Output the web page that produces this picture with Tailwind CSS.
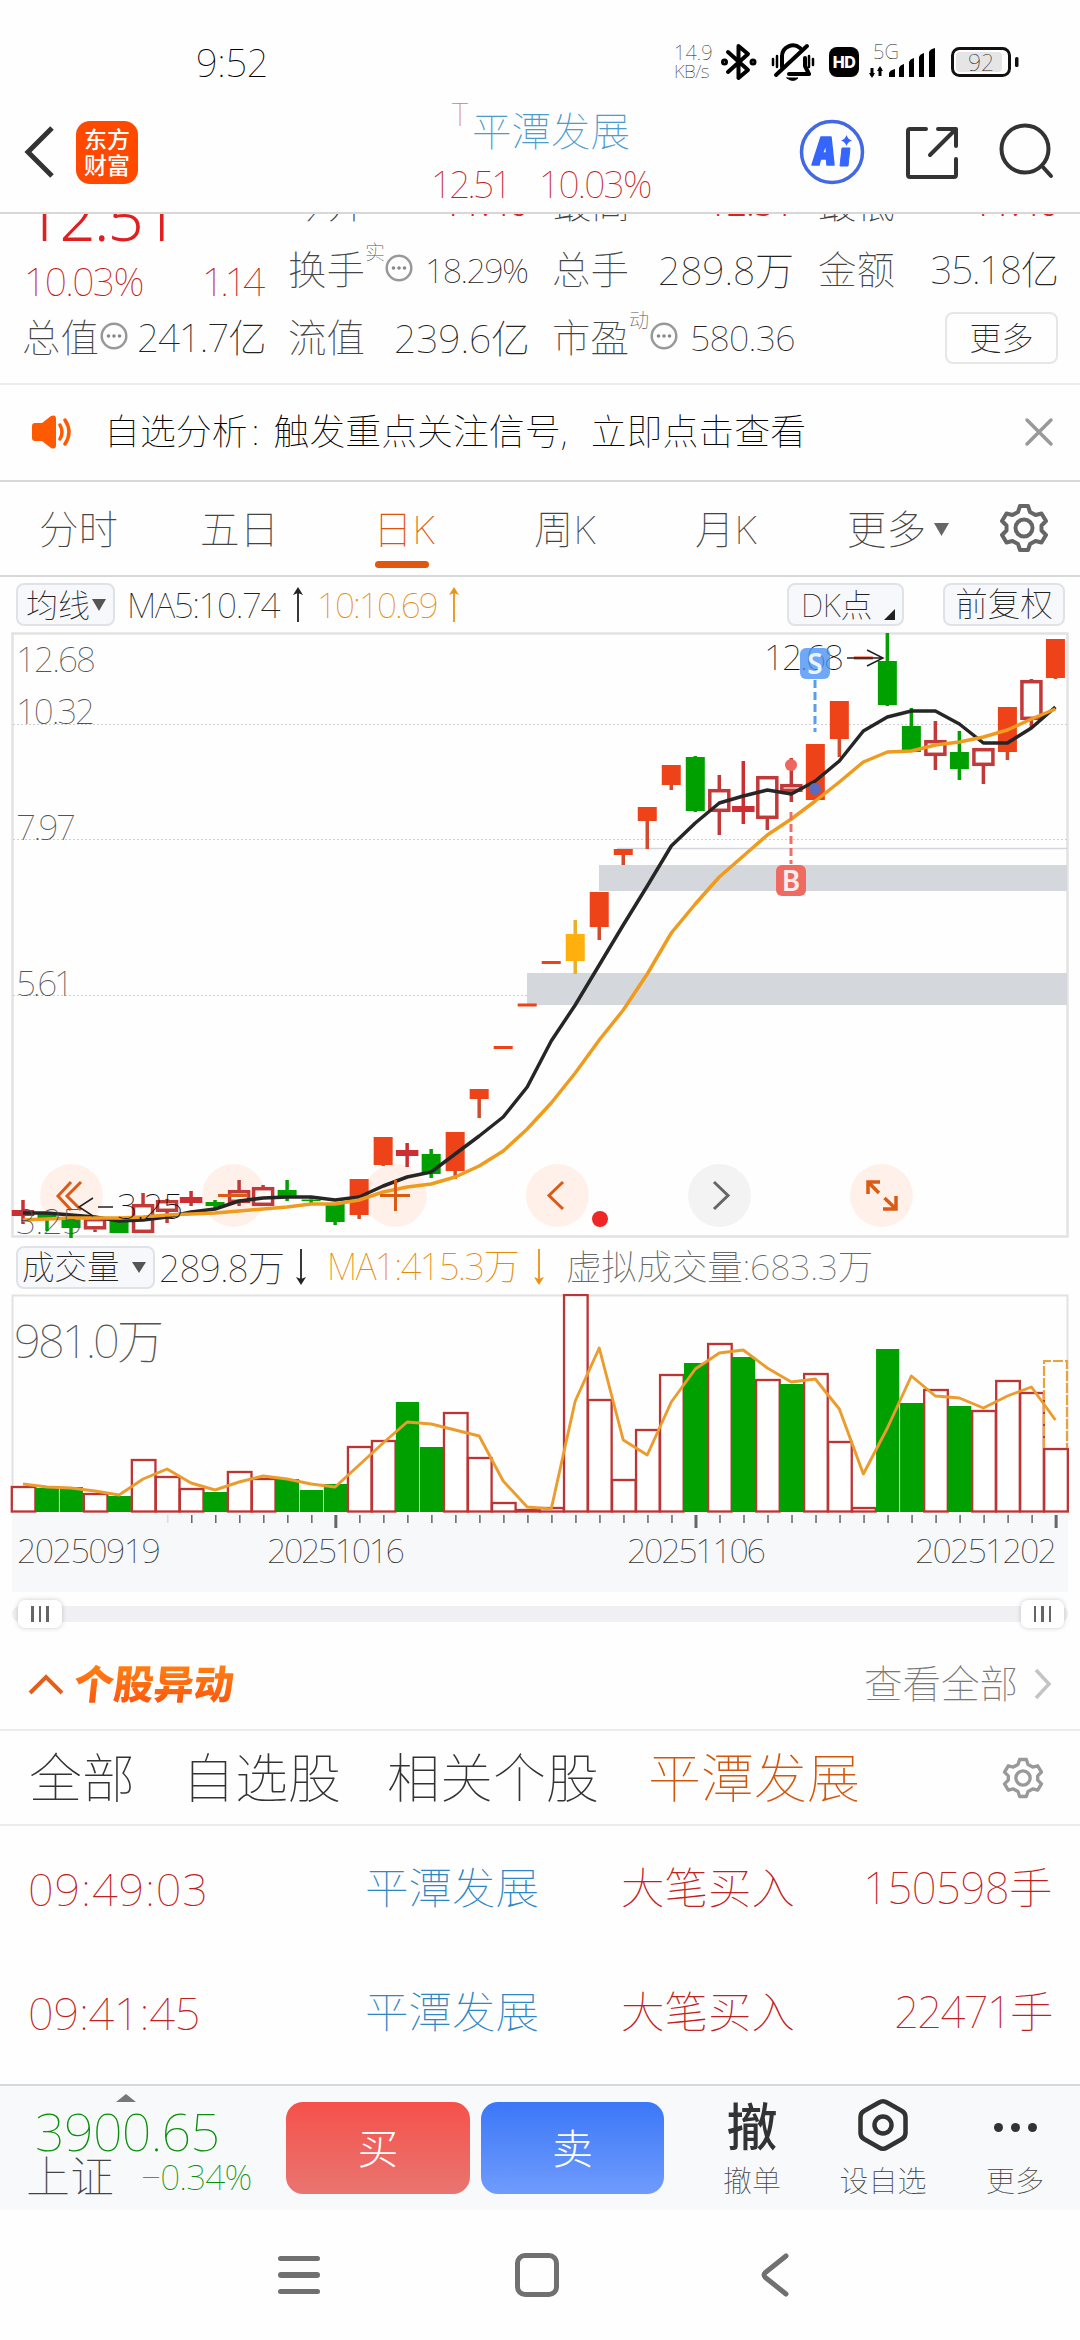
<!DOCTYPE html>
<html lang="zh-CN">
<head>
<meta charset="utf-8">
<title>平潭发展</title>
<script src="https://cdn.jsdelivr.net/npm/@tailwindcss/browser@4"></script>
</head>
<body class="bg-white">
<div class="flex h-[2340px] w-[1080px] flex-col overflow-hidden bg-[#fefefe] font-['Noto_Sans','Noto_Sans_CJK_SC',sans-serif] font-[150] leading-none whitespace-nowrap text-[#222]">

  <!-- Status bar -->
  <div class="flex h-[84px] shrink-0 items-center pt-[40px] text-black">
    <span class="ml-[196px] w-[478px] text-[38px] tracking-[-0.3px]">9:52</span>
    <div class="flex w-[40px] flex-col text-[20px] leading-[18px] text-[#222]"><span>14.9</span><span class="text-[19px] tracking-[-0.5px]">KB/s</span></div>
    <svg class="ml-[6px] h-[40px] w-[38px]" viewBox="0 0 38 40" fill="none" stroke="#000" stroke-width="4" stroke-linejoin="round" stroke-linecap="round"><path d="M8 10 L28 28 L18.500 36 V4 L28 12 L8 30"/><circle cx="4.500" cy="20" r="1.500"/><circle cx="33" cy="20" r="1.500"/></svg>
    <svg class="ml-[12px] h-[40px] w-[46px]" viewBox="0 0 46 40" fill="none" stroke="#000" stroke-width="4" stroke-linecap="round"><path d="M12 25V14a11 11 0 0 1 18-8M35 16v8l4 8H19" stroke-linejoin="round"/><path d="M6 33 37 4" /><path d="M3 17v6M7 14v11M39 14v11M43 17v6" stroke-width="2.500"/><path d="M17 36h11q-5 5-11 0z" fill="#000" stroke-width="1"/></svg>
    <div class="ml-[13px] flex h-[30px] w-[30px] items-center justify-center rounded-[8px] bg-black font-['Inter'] text-[16px] font-extrabold tracking-[-0.5px] text-white">HD</div>
    <svg class="ml-[10px] h-[44px] w-[72px]" viewBox="0 -2 72 44"><text x="4" y="17" font-size="20" fill="#222">5G</text><path d="M3 26v8M11 26v8" stroke="#000" stroke-width="3"/><path d="M0 31h6l-3 5zM8 29h6l-3-5z" /><g fill="#000"><path d="M20 35v-4q1-3 6-4v8zM30 35v-9q1-3 5-4v13zM40 35V20q1-3 5-4v19zM50 35V15q1-3 5-4v24zM60 35V10q1-3 6-4v29z"/></g></svg>
    <svg class="ml-[10px] h-[32px] w-[70px]" viewBox="0 0 70 32"><rect x="1.500" y="2.500" width="57" height="27" rx="7" fill="#fff" stroke="#111" stroke-width="3"/><rect x="5" y="6" width="46" height="20" rx="4" fill="#e5e5e5"/><rect x="64" y="11" width="3.500" height="10" rx="1.500" fill="#111"/><text x="17" y="24.500" font-size="23" fill="#222">92</text></svg>
  </div>

  <!-- Title bar -->
  <div class="flex h-[130px] shrink-0 items-center border-b-2 border-[#d8d8d8] pt-2">
    <svg class="ml-[22px] h-[54px] w-[34px]" viewBox="0 0 34 54" fill="none" stroke="#333" stroke-width="5"><path d="M30 3 6 27l24 24"/></svg>
    <div class="ml-[20px] flex h-[63px] w-[62px] flex-col items-center justify-center rounded-[14px] bg-[#ff4800] text-[23px] leading-[26px] font-medium text-white"><span>东方</span><span>财富</span></div>
    <div class="ml-[314px] flex w-[347px] flex-col">
      <div class="flex h-[48px] items-center text-[39.500px] text-[#4b9ccc]"><span class="w-[20px] pb-[36px] text-[32px] text-[#dd8b1f]">T</span><span>平潭发展</span></div>
      <div class="-ml-[21px] flex h-[40px] items-center pt-[14px] text-[37px] text-[#c22020]"><span class="w-[108px] tracking-[-2.800px]">12.51</span><span class="tracking-[-1.700px]">10.03%</span></div>
    </div>
    <svg class="h-[66px] w-[66px]" viewBox="0 0 66 66"><circle cx="33" cy="33" r="30.500" fill="none" stroke="#4268e4" stroke-width="3.500"/><path d="M13 46 22 18h10l3 28h-7l-.5-6h-6L20 46zM23.500 34h4l-.5-9z" fill="#3565fb" fill-rule="evenodd" stroke="#3565fb" stroke-width="1.500" stroke-linejoin="round"/><path d="M43 29h8l-2 18h-8z" fill="#3565fb" stroke="#3565fb" stroke-width="1" stroke-linejoin="round"/><path d="M47.500 16q1.500 4.500 5.500 5.500-4 1-5.500 5.500-1.500-4.500-5.500-5.500 4-1 5.500-5.500z" fill="#3565fb"/></svg>
    <svg class="ml-[39px] h-[54px] w-[54px]" viewBox="0 0 54 54" fill="none" stroke="#333" stroke-width="4" stroke-linecap="round" stroke-linejoin="round"><path d="M22 4H6q-2 0-2 2v44q0 2 2 2h44q2 0 2-2V34M34 4h18v17M50 6 26 30"/></svg>
    <svg class="ml-[41px] h-[58px] w-[56px]" viewBox="0 0 56 58" fill="none" stroke="#333" stroke-width="4" stroke-linecap="round"><circle cx="26" cy="26" r="23.500"/><path d="m43 43 9 10"/></svg>
  </div>

  <!-- Quote summary, scrolled under the title bar -->
  <div class="h-[171px] shrink-0 overflow-hidden border-b-2 border-[#ececec]">
    <div class="-mt-[48px] flex h-[137px]">
      <div class="ml-[25px] w-[264px]">
        <div class="flex h-[86px] items-center pt-[14px] text-[63px] font-[360] tracking-[-1.500px] text-[#e02020]"><span>12.51</span></div>
        <div class="flex h-[51px] items-center pt-[5px] text-[39px] text-[#c22020]"><span class="-ml-[1px] w-[178px] tracking-[-1.600px]">10.03%</span><span class="tracking-[-4px]">1.14</span></div>
      </div>
      <div class="grid flex-1 grid-cols-[264px_265px_240px] grid-rows-[69px_69px] text-[38.500px]">
        <div class="flex items-center justify-between pt-[5px] pr-[25px]"><span class="text-[#444]">今开</span><span class="text-[36px] font-light tracking-[-1px] text-[#e02020]">11.40</span></div>
        <div class="flex items-center justify-between pt-[5px] pr-[25px]"><span class="text-[#444]">最高</span><span class="text-[36px] font-light tracking-[-1px] text-[#e02020]">12.51</span></div>
        <div class="flex items-center justify-between pt-[5px]"><span class="text-[#444]">最低</span><span class="text-[36px] font-light tracking-[-1px] text-[#e02020]">11.40</span></div>
        <div class="flex items-center"><span class="-ml-[1px] text-[#444]">换手</span><span class="pb-[34px] text-[20px] text-[#555]">实</span>
          <svg class="mb-[3px] h-[28px] w-[28px]" viewBox="0 0 28 28" fill="#888"><circle cx="14" cy="14" r="12.300" fill="none" stroke="#999" stroke-width="2.500"/><circle cx="8.500" cy="14" r="1.800"/><circle cx="14" cy="14" r="1.800"/><circle cx="19.500" cy="14" r="1.800"/></svg>
          <span class="ml-[12px] text-[34px] tracking-[-1.600px]">18.29%</span></div>
        <div class="flex items-center justify-between pr-[24px]"><span class="-ml-[1px] text-[#444]">总手</span><span class="text-[39px] tracking-[-0.1px]">289.8万</span></div>
        <div class="flex items-center justify-between"><span class="text-[#444]">金额</span><span class="tracking-[-1.200px]">35.18亿</span></div>
      </div>
    </div>
    <div class="flex h-[69px] items-center text-[38.500px]">
      <div class="ml-[22px] flex w-[266px] items-center"><span class="text-[#444]">总值</span>
        <svg class="mb-[3px] ml-[1px] h-[28px] w-[28px]" viewBox="0 0 28 28" fill="#888"><circle cx="14" cy="14" r="12.300" fill="none" stroke="#999" stroke-width="2.500"/><circle cx="8.500" cy="14" r="1.800"/><circle cx="14" cy="14" r="1.800"/><circle cx="19.500" cy="14" r="1.800"/></svg>
        <span class="ml-[9px] tracking-[-1px]">241.7亿</span></div>
      <div class="flex w-[264px] items-center justify-between pr-[22px]"><span class="text-[#444]">流值</span><span class="text-[39px] tracking-[-0.1px]">239.6亿</span></div>
      <div class="flex w-[393px] items-center"><span class="text-[#444]">市盈</span><span class="pb-[34px] text-[20px] text-[#555]">动</span>
        <svg class="mb-[3px] ml-[1px] h-[28px] w-[28px]" viewBox="0 0 28 28" fill="#888"><circle cx="14" cy="14" r="12.300" fill="none" stroke="#999" stroke-width="2.500"/><circle cx="8.500" cy="14" r="1.800"/><circle cx="14" cy="14" r="1.800"/><circle cx="19.500" cy="14" r="1.800"/></svg>
        <span class="ml-[12px] text-[35.500px] tracking-[-0.7px]">580.36</span></div>
      <div class="flex h-[52px] w-[113px] items-center justify-center rounded-[8px] border-2 border-[#e6e6e6] text-[32px]">更多</div>
    </div>
  </div>

  <!-- Notice -->
  <div class="flex h-[97px] shrink-0 items-center border-b-2 border-[#d8d8d8] pb-[2px]">
    <svg class="ml-[30px] h-[36px] w-[44px]" viewBox="0 0 44 36"><path d="M2 12q0-3 3-3h7l9-7q5-2 5 3v26q0 5-5 3l-9-7H5q-3 0-3-3z" fill="#ff5a00"/><path d="M30 11q4 7 0 14M35 6q8 12 0 24" fill="none" stroke="#ff5a00" stroke-width="3.500" stroke-linecap="round"/></svg>
    <div class="ml-[30px] flex w-[920px] text-[35.900px] text-black"><span>自选分析</span><span class="w-[26px] pl-1">:</span><span>触发重点关注信号</span><span class="w-[30px]">,</span><span>立即点击查看</span></div>
    <svg class="h-[30px] w-[30px]" viewBox="0 0 30 30" stroke="#999" stroke-width="3.500" stroke-linecap="round"><path d="m3 3 24 24M27 3 3 27"/></svg>
  </div>

  <!-- Period tabs -->
  <div class="flex h-[95px] shrink-0 items-center border-b-2 border-[#d8d8d8] pt-[2px] text-[39.500px] text-[#444]">
    <span class="ml-[39px] w-[161px]">分时</span>
    <span class="w-[173px]">五日</span>
    <div class="relative flex w-[161px] items-center text-[#e2500a]"><span>日K</span><span class="absolute top-[51px] left-[2px] h-[7px] w-[54px] rounded-full bg-[#e2570f]"></span></div>
    <span class="w-[161px]">周K</span>
    <span class="w-[152px]">月K</span>
    <span>更多</span>
    <svg class="ml-[8px] h-[13px] w-[15px]" viewBox="0 0 15 13"><path d="M0 0h15L7.500 13z" fill="#666"/></svg>
    <svg class="mb-[4px] ml-[50px] h-[50px] w-[50px]" viewBox="0 0 50 50" fill="none" stroke="#666" stroke-width="4" stroke-linejoin="round"><circle cx="25" cy="25" r="8.500"/><path d="M21 3h8l2 6 5.500 3 6-1.500 4.500 7.500-4.500 4.500v5l4.500 4.500-4.500 7.500-6-1.500-5.500 3-2 6h-8l-2-6-5.500-3-6 1.500L3 32l4.500-4.500v-5L3 18l4.500-7.500 6 1.500L19 9z"/></svg>
  </div>

  <!-- Indicator bar -->
  <div class="flex h-[55px] shrink-0 items-center text-[35px]">
    <div class="ml-[16px] flex h-[43px] w-[99px] items-center gap-[2px] rounded-[8px] border-2 border-[#dfe2e7] bg-[#f7f8fb] pl-[8px] text-[32px]"><span>均线</span><svg class="h-[12px] w-[14px]" viewBox="0 0 14 12"><path d="M0 0h14L7 12z" fill="#555"/></svg></div>
    <span class="ml-[12px] w-[164px] tracking-[-1.400px]">MA5:10.74</span>
    <svg class="h-[35px] w-[14px]" viewBox="0 0 14 35"><path d="M7 5v30" stroke="#222" stroke-width="1.800"/><path d="m7 0 5 8-5-2-5 2z" fill="#222"/></svg>
    <span class="ml-[12px] w-[130px] tracking-[-1.900px] text-[#e88a08]">10:10.69</span>
    <svg class="h-[35px] w-[14px]" viewBox="0 0 14 35"><path d="M7 5v30" stroke="#eb9216" stroke-width="1.800"/><path d="m7 0 5 8-5-2-5 2z" fill="#eb9216"/></svg>
    <div class="ml-[326px] flex h-[43px] w-[117px] items-center rounded-[8px] border-2 border-[#dfe2e7] bg-[#f7f8fb] pl-[12px] text-[32px]"><span class="tracking-[-0.3px]">DK点</span><svg class="mt-[20px] ml-[12px] h-[11px] w-[11px]" viewBox="0 0 11 11"><path d="M11 0v11H0z" fill="#222"/></svg></div>
    <div class="ml-[39px] flex h-[43px] w-[122px] items-center justify-center rounded-[8px] border-2 border-[#dfe2e7] bg-[#f7f8fb] text-[32.500px]">前复权</div>
  </div>

  <!-- Candlestick chart: the view box keeps the page's vertical coordinates -->
  <svg id="kline" class="h-[606px] w-[1080px] shrink-0" viewBox="0 632 1080 606"></svg>

  <!-- Volume header -->
  <div class="flex h-[56px] shrink-0 items-center pt-[2px] text-[37px]">
    <div class="ml-[16px] flex h-[43px] w-[139px] items-center gap-[12px] rounded-[8px] border-2 border-[#dfe2e7] bg-[#f7f8fb] pl-[4px] text-[32.500px]"><span>成交量</span><svg class="h-[11px] w-[14px]" viewBox="0 0 14 11"><path d="M0 0h14L7 11z" fill="#555"/></svg></div>
    <span class="ml-[4px] w-[135px] tracking-[-0.7px]">289.8万</span>
    <svg class="h-[36px] w-[14px]" viewBox="0 0 14 36"><path d="M7 0v30" stroke="#222" stroke-width="1.800"/><path d="m7 36 5-8-5 2-5-2z" fill="#222"/></svg>
    <span class="ml-[19px] w-[205px] text-[36px] tracking-[-1.400px] text-[#e88a08]">MA1:415.3万</span>
    <svg class="h-[36px] w-[14px]" viewBox="0 0 14 36"><path d="M7 0v30" stroke="#eb9216" stroke-width="1.800"/><path d="m7 36 5-8-5 2-5-2z" fill="#eb9216"/></svg>
    <span class="ml-[20px] text-[35.500px] tracking-[-0.2px] text-[#666]">虚拟成交量:683.3万</span>
  </div>

  <!-- Volume chart and date axis -->
  <svg id="volume" class="h-[298px] w-[1080px] shrink-0" viewBox="0 1294 1080 298"></svg>

  <!-- Range slider -->
  <div class="flex h-[50px] shrink-0 items-center px-[12px] pb-[6px]">
    <div class="flex h-[16px] w-[1056px] items-center justify-between rounded-full bg-[#f0f0f3] pr-[4px] pl-[6px]">
      <div class="flex h-[28px] w-[44px] items-center justify-center gap-[5px] rounded-[7px] bg-white shadow-[0_0_5px_rgba(0,0,0,0.2)]"><i class="h-[16px] w-[2.500px] bg-[#666]"></i><i class="h-[16px] w-[2.500px] bg-[#666]"></i><i class="h-[16px] w-[2.500px] bg-[#666]"></i></div>
      <div class="flex h-[28px] w-[43px] items-center justify-center gap-[5px] rounded-[7px] bg-white shadow-[0_0_5px_rgba(0,0,0,0.2)]"><i class="h-[16px] w-[2.500px] bg-[#666]"></i><i class="h-[16px] w-[2.500px] bg-[#666]"></i><i class="h-[16px] w-[2.500px] bg-[#666]"></i></div>
    </div>
  </div>

  <!-- Unusual moves -->
  <div class="flex h-[89px] shrink-0 items-center border-b-2 border-[#ececec] pb-[4px]">
    <svg class="ml-[28px] h-[22px] w-[36px]" viewBox="0 0 36 22" fill="none" stroke="#e2601a" stroke-width="4"><path d="M2 20 18 4l16 16"/></svg>
    <span class="ml-[10px] w-[790px]"><span class="inline-block -skew-x-6 bg-linear-to-b from-[#ff8412] to-[#fb5010] bg-clip-text py-1 text-[40px] font-black text-transparent">个股异动</span></span>
    <span class="text-[38.500px] text-[#777]">查看全部</span>
    <svg class="ml-[15px] h-[34px] w-[20px]" viewBox="0 0 20 34" fill="none" stroke="#c4c4c4" stroke-width="3.500"><path d="m3 3 13 14L3 31"/></svg>
  </div>
  <div class="flex h-[95px] shrink-0 items-center border-b-2 border-[#ececec] text-[53px] text-[#333]">
    <span class="ml-[29px] w-[153px]">全部</span><span class="w-[205px]">自选股</span><span class="w-[261px]">相关个股</span><span class="w-[354px] text-[#d4560a]">平潭发展</span>
    <svg class="h-[42px] w-[42px]" viewBox="0 0 50 50" fill="none" stroke="#999" stroke-width="4" stroke-linejoin="round"><circle cx="25" cy="25" r="8.500"/><path d="M21 3h8l2 6 5.500 3 6-1.500 4.500 7.500-4.500 4.500v5l4.500 4.500-4.500 7.500-6-1.500-5.500 3-2 6h-8l-2-6-5.500-3-6 1.500L3 32l4.500-4.500v-5L3 18l4.500-7.500 6 1.500L19 9z"/></svg>
  </div>
  <div class="flex h-[258px] shrink-0 flex-col text-[43.500px] text-[#c22020]">
    <div class="flex h-[124px] items-center"><span class="ml-[28px] w-[337px] text-[45px] tracking-[0.9px]">09:49:03</span><span class="w-[256px] text-[#2f86c6]">平潭发展</span><span>大笔买入</span><span class="ml-auto pr-[28px] tracking-[-0.5px]">150598手</span></div>
    <div class="flex h-[124px] items-center"><span class="ml-[28px] w-[337px] text-[45px] tracking-[-0.2px]">09:41:45</span><span class="w-[256px] text-[#2f86c6]">平潭发展</span><span>大笔买入</span><span class="ml-auto pr-[28px] tracking-[-1.600px]">22471手</span></div>
  </div>

  <!-- Trade bar -->
  <div class="flex h-[126px] shrink-0 border-t-2 border-[#d6d8da] bg-[#f7f9fb]">
    <div class="ml-[26px] flex w-[260px] flex-col pt-[8px]">
      <svg class="ml-[90px] h-[8px] w-[20px]" viewBox="0 0 20 8"><path d="M10 0 20 8H0z" fill="#777"/></svg>
      <span class="flex h-[58px] items-center pl-[9px] text-[52px] tracking-[-0.7px] text-[#0a900a]">3900.65</span>
      <div class="flex h-[32px] items-center text-[44px] text-[#444]"><span>上证</span><span class="ml-[27px] text-[35px] tracking-[-0.8px] text-[#0a900a]">−0.34%</span></div>
    </div>
    <div class="mt-[16px] flex h-[92px] gap-[11px] text-[41px] font-light text-white">
      <div class="flex w-[184px] items-center justify-center rounded-[17px] bg-linear-to-b from-[#f5504a] to-[#e97470]">买</div>
      <div class="flex w-[183px] items-center justify-center rounded-[17px] bg-linear-to-b from-[#3b77f7] to-[#6f9bfd]">卖</div>
    </div>
    <div class="ml-[45px] flex w-[86px] flex-col items-center text-[29px] text-[#444]"><span class="flex h-[78px] items-center pt-[2px] text-[51px] font-medium text-[#333]">撤</span><span class="pt-[2px]">撤单</span></div>
    <div class="ml-[43px] flex w-[90px] flex-col items-center text-[29px] text-[#444]"><span class="flex h-[78px] items-center"><svg class="h-[54px] w-[50px]" viewBox="0 0 50 54" fill="none" stroke="#333" stroke-width="4.500" stroke-linejoin="round"><path d="M21 4.500q4-2.500 8 0L44 13q3.500 2 3.500 6v16q0 4-3.500 6l-15 8.500q-4 2.500-8 0L6 41q-3.500-2-3.500-6V19q0-4 3.500-6z"/><circle cx="25" cy="27" r="8.500"/></svg></span><span class="pt-[2px]">设自选</span></div>
    <div class="ml-[42px] flex w-[90px] flex-col items-center text-[29px] text-[#444]"><span class="flex h-[78px] items-center gap-[8px] pt-[4px]"><i class="h-[9px] w-[9px] rounded-full bg-[#333]"></i><i class="h-[9px] w-[9px] rounded-full bg-[#333]"></i><i class="h-[9px] w-[9px] rounded-full bg-[#333]"></i></span><span class="pt-[2px]">更多</span></div>
  </div>

  <!-- System navigation -->
  <div class="flex h-[130px] shrink-0 items-center">
    <div class="ml-[278px] flex w-[42px] flex-col gap-[11px]"><i class="h-[5.500px] rounded-full bg-[#707070]"></i><i class="h-[5.500px] rounded-full bg-[#707070]"></i><i class="h-[5.500px] rounded-full bg-[#707070]"></i></div>
    <div class="ml-[195px] h-[44px] w-[44px] rounded-[10px] border-[5px] border-[#707070]"></div>
    <svg class="ml-[201px] h-[44px] w-[30px]" viewBox="0 0 30 44" fill="none" stroke="#707070" stroke-width="5" stroke-linecap="round"><path d="M26 3 6 19q-4 3 0 6l20 16"/></svg>
  </div>
</div>

<script>
// Candle: kind, high, body top, body bottom, low
// r = hollow up, d = solid crimson doji, o = limit-up, g = down, y = highlighted, n = thin green doji
const candles = [
['d',1200,1210,1216,1224],['g',1214,1214,1219,1231],['g',1218,1218,1228,1238],['r',1218,1218,1229.5,1232],['g',1220,1220,1233,1233],
['r',1193,1204,1233,1233],['r',1199,1200,1212,1223],['d',1191,1197,1203,1206],['g',1200,1202,1206,1210],['r',1180,1190,1203,1206],
['r',1185,1187,1206,1206],['g',1180,1190,1196,1201],['n',1198,1199.5,1201,1203],['g',1204,1204,1222,1225],['o',1179,1179,1215,1219],
['o',1137,1137,1165,1166],['d',1143,1150,1156,1167],['g',1149,1154,1174,1178],['o',1132,1132,1171,1179],['o',1089,1089,1099,1118],
['o',1046,1046,1049,1049],['o',1003.5,1003.5,1006.5,1006.5],['o',961,961,964,964],['y',920,934,961,974],['o',892,892,927,940],
['o',849,849,855,865],['o',807,807,821,849],['o',765,765,785,790],['g',756,757,811,812],['r',775,789,812,835],
['d',761,806,812,824],['r',776,776,819,830],['r',758,784,792,802],['o',744,744,800,800],['o',701,701,739,757],
['o',656.5,656.5,659.5,659.5],['g',633,661,705,706],['g',708,726,752,752],['r',721,740,756,770],['g',731,752,769,780],
['r',748,748,766,784],['o',707,707,752,760],['r',679,680,720,728],['o',639,639,678,679]];
const ma5 = [1213,1213,1215,1217,1221,1220,1217,1212,1209,1201,1198,1197,1197,1200,1197,1186,1177,1172,1154,1136,1117,1087,1041,1005,965,925,886,846,823,803,796,790,794,781,761,731,717,711,711,724,743,743,728,707];
const ma10 = [1220,1219,1218,1218,1218,1217,1215,1214,1213,1211,1209,1207,1204,1204,1200,1192,1187,1184,1177,1166,1151,1129,1103,1073,1040,1010,974,933,904,877,856,835,819,801,782,762,752,751,745,742,737,730,719,709];
const bars = 'r1487 g1488 g1487 r1494 g1496 r1460 r1477 r1489 g1492 r1472 r1479 g1479 g1490 g1484 r1447 r1441 g1402 g1447 r1413 r1458 r1503 r1510 r1508 r1295 r1400 r1480 r1430 r1375 g1363 r1344 g1357 r1380 g1384 r1374 r1442 r1508 g1349 g1403 r1390 g1406 r1411 r1381 r1393 r1449'.split(' ');
const vma = [1484,1487,1488,1491,1495,1479,1469,1483,1490,1482,1476,1479,1484,1487,1465,1443,1422,1424,1430,1436,1481,1507,1509,1401,1348,1440,1455,1402,1369,1353,1350,1368,1382,1379,1409,1474,1428,1376,1396,1398,1408,1396,1387,1420];
const X = i => 23 + 24.01 * i;
const line = (a, c, w) => `<polyline points="${a.map((y, i) => X(i) + ',' + y).join(' ')}" fill="none" stroke="${c}" stroke-width="${w}" stroke-linejoin="round"/>`;
const text = (x, y, w, s, size, c) => `<text x="${x}" y="${y}" font-size="${size}" textLength="${w}" fill="${c}">${s}</text>`;
const colour = {r:'#c13a3a', d:'#cc2f33', o:'#ee4218', g:'#00a000', y:'#ffb00d', n:'#00a000'};

let k = '<rect x="12.500" y="633.500" width="1055" height="603" fill="none" stroke="#e2e2e2" stroke-width="2.500"/>';
for (const y of [724.5, 839.5, 995.5]) k += `<path d="M13 ${y}H1067" stroke="#cfcfcf" stroke-width="1" stroke-dasharray="2 2"/>`;
k += '<path d="M617 848.500H1067" stroke="#d3d5da" stroke-width="1.500"/><rect x="599" y="865" width="468" height="26" fill="#d4d7dc"/><rect x="527" y="973" width="540" height="32" fill="#d4d7dc"/>';
[71.5, 233.5, 395.3, 557.4, 719.5, 881.5].forEach((x, i) => k += `<circle cx="${x}" cy="1195.500" r="31.500" fill="${i == 4 ? '#f3f3f3' : '#fff1ea'}"/>`);
candles.forEach(([t, h, a, b, l], i) => {
  const x = X(i), c = colour[t];
  const wick = t == 'o' ? '#d14c2c' : t == 'y' ? '#eab02c' : c;
  k += `<path d="M${x} ${h}V${a}M${x} ${b}V${l}" stroke="${wick}" stroke-width="3.500"/>`;
  if (t == 'r') k += `<rect x="${x - 9.5}" y="${a + 1.7}" width="19" height="${Math.max(1, b - a - 3.4)}" fill="#fff" fill-opacity=".5" stroke="${c}" stroke-width="3.500"/>`;
  else { const w = t == 'd' ? 22.5 : 19; k += `<rect x="${x - w / 2}" y="${a}" width="${w}" height="${b - a}" fill="${c}"/>`; }
});
k += line(ma5, '#262626', 3.5) + line(ma10, '#ef9b1e', 3.5);
k += '<g fill="none" stroke="#da5b16" stroke-width="3"><path d="M71 1182 58 1196l13 14M81 1182 67 1196l14 14M218 1195.500H248M380 1195.500H410M395.500 1180V1211M563 1182 549 1195.500 563 1209"/><path d="M714 1182l14 13.500L714 1209" stroke="#666"/><path d="M868 1194V1182H880M868 1182 879 1193M896 1196V1209H883M896 1209 884.500 1198" stroke-width="3.500"/></g>';
k += '<circle cx="600" cy="1219" r="8" fill="#ee2626"/>';
k += '<path d="M791 812V864" stroke="#ee6f66" stroke-width="3" stroke-dasharray="8 4"/><path d="M815 680V732" stroke="#5b9bf0" stroke-width="3" stroke-dasharray="8 4"/><circle cx="791" cy="765" r="6" fill="#f0655d"/><circle cx="815" cy="789" r="6" fill="#5b6bbd"/>';
k += [[672,80,'12.68'],[724,79,'10.32'],[840,60,'7.97'],[996,58,'5.61'],[1234,66,'3.25']].map(([y, w, s]) => text(16, y, w, s, 35, '#555')).join('');
k += text(764, 670, 80, '12.68', 35.5, '#111') + text(117, 1219, 66, '3.25', 35.5, '#111');
k += '<path d="M847 658H883M867 650l16 8-16 8M93 1198l-14 9 14 9M98 1207h15" fill="none" stroke="#222" stroke-width="1.500"/>';
k += '<rect x="800" y="648" width="30" height="31" rx="6" fill="#4a92f5" fill-opacity=".8"/><text x="815" y="674" text-anchor="middle" font-size="28" font-weight="600" fill="#fff" fill-opacity=".9">S</text>';
k += '<rect x="776" y="865" width="30" height="31" rx="6" fill="#ef6b62"/><text x="791" y="891" text-anchor="middle" font-size="28" font-weight="600" fill="#fff" fill-opacity=".9">B</text>';
document.getElementById('kline').innerHTML = k;

let v = '<rect x="12" y="1514" width="1056" height="78" fill="#f7f8fa"/><path d="M12.500 1513V1295.500H1067.500V1513" fill="none" stroke="#e2e2e2" stroke-width="2"/>';
bars.forEach((s, i) => {
  const x = X(i), y = +s.slice(1);
  v += s[0] == 'g' ? `<rect x="${x - 11.3}" y="${y}" width="23.200" height="${1512 - y}" fill="#00a000"/>`
    : `<rect x="${x - 11.2}" y="${y}" width="23.600" height="${1511.5 - y}" fill="#fff" stroke="#bd3434" stroke-width="2.300"/>`;
});
v += '<path d="M1044 1448V1361H1067V1448" fill="none" stroke="#e9a33a" stroke-width="2.200" stroke-dasharray="10 2"/>' + line(vma, '#eb9c2c', 2.9);
for (let i = 6; i < 44; i++) {
  const big = [13, 28, 43].includes(i);
  v += `<path d="M${X(i) + 0.7} 1515V${big ? 1528 : 1523}" stroke="${i == 6 ? '#ddd' : '#666'}" stroke-width="${big ? 3 : 1.5}"/>`;
}
v += text(14, 1358, 150, '981.0万', 47, '#555');
v += text(17, 1563, 144, '20250919', 34, '#333') + text(267, 1563, 138, '20251016', 34, '#333') + text(627, 1563, 139, '20251106', 34, '#333') + text(915, 1563, 142, '20251202', 34, '#333');
document.getElementById('volume').innerHTML = v;
</script>
</body>
</html>
